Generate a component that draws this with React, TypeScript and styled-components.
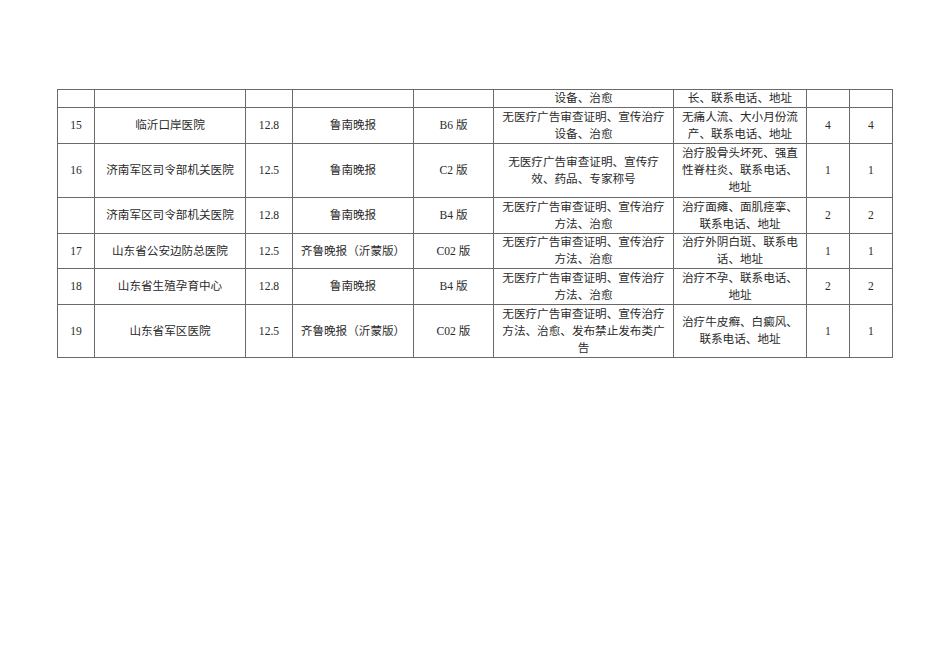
import React from "react";
import styled, { createGlobalStyle } from "styled-components";

const GlobalStyle = createGlobalStyle`
  html, body {
    margin: 0;
    padding: 0;
    background: #ffffff;
  }
`;

const Page = styled.div`
  width: 950px;
  height: 672px;
  box-sizing: border-box;
  padding: 89px 0 0 57px;
  background: #fff;
`;

const Table = styled.table`
  border-collapse: collapse;
  table-layout: fixed;
  width: 836px;
  font-family: "Liberation Serif", "Noto Sans CJK SC", serif;
  font-size: 11.6px;
  line-height: 17px;
  color: #2a2a2a;
`;

const Row = styled.tr<{ h: number }>`
  height: ${({ h }) => h}px;
`;

const Cell = styled.td`
  border: 1px solid #6a6a6a;
  padding: 0;
  text-align: center;
  vertical-align: middle;
  white-space: nowrap;
  overflow: hidden;
`;

const widths = [37, 151, 47, 121, 80, 180, 133, 43, 43];

type RowData = {
  h: number;
  cells: string[];
};

const rows: RowData[] = [
  { h: 18, cells: ["", "", "", "", "", "设备、治愈", "长、联系电话、地址", "", ""] },
  {
    h: 36,
    cells: [
      "15",
      "临沂口岸医院",
      "12.8",
      "鲁南晚报",
      "B6 版",
      "无医疗广告审查证明、宣传治疗\n设备、治愈",
      "无痛人流、大小月份流\n产、联系电话、地址",
      "4",
      "4",
    ],
  },
  {
    h: 54,
    cells: [
      "16",
      "济南军区司令部机关医院",
      "12.5",
      "鲁南晚报",
      "C2 版",
      "无医疗广告审查证明、宣传疗\n效、药品、专家称号",
      "治疗股骨头坏死、强直\n性脊柱炎、联系电话、\n地址",
      "1",
      "1",
    ],
  },
  {
    h: 36,
    cells: [
      "",
      "济南军区司令部机关医院",
      "12.8",
      "鲁南晚报",
      "B4 版",
      "无医疗广告审查证明、宣传治疗\n方法、治愈",
      "治疗面瘫、面肌痉挛、\n联系电话、地址",
      "2",
      "2",
    ],
  },
  {
    h: 35,
    cells: [
      "17",
      "山东省公安边防总医院",
      "12.5",
      "齐鲁晚报（沂蒙版）",
      "C02 版",
      "无医疗广告审查证明、宣传治疗\n方法、治愈",
      "治疗外阴白斑、联系电\n话、地址",
      "1",
      "1",
    ],
  },
  {
    h: 36,
    cells: [
      "18",
      "山东省生殖孕育中心",
      "12.8",
      "鲁南晚报",
      "B4 版",
      "无医疗广告审查证明、宣传治疗\n方法、治愈",
      "治疗不孕、联系电话、\n地址",
      "2",
      "2",
    ],
  },
  {
    h: 53,
    cells: [
      "19",
      "山东省军区医院",
      "12.5",
      "齐鲁晚报（沂蒙版）",
      "C02 版",
      "无医疗广告审查证明、宣传治疗\n方法、治愈、发布禁止发布类广\n告",
      "治疗牛皮癣、白癜风、\n联系电话、地址",
      "1",
      "1",
    ],
  },
];

const Lines: React.FC<{ text: string }> = ({ text }) => {
  const parts = text.split("\n");
  return (
    <>
      {parts.map((p, i) => (
        <React.Fragment key={i}>
          {p}
          {i < parts.length - 1 ? <br /> : null}
        </React.Fragment>
      ))}
    </>
  );
};

export default function App() {
  return (
    <>
      <GlobalStyle />
      <Page>
        <Table>
          <colgroup>
            {widths.map((w, i) => (
              <col key={i} style={{ width: w }} />
            ))}
          </colgroup>
          <tbody>
            {rows.map((r, i) => (
              <Row key={i} h={r.h}>
                {r.cells.map((c, j) => (
                  <Cell key={j}>
                    <Lines text={c} />
                  </Cell>
                ))}
              </Row>
            ))}
          </tbody>
        </Table>
      </Page>
    </>
  );
}
